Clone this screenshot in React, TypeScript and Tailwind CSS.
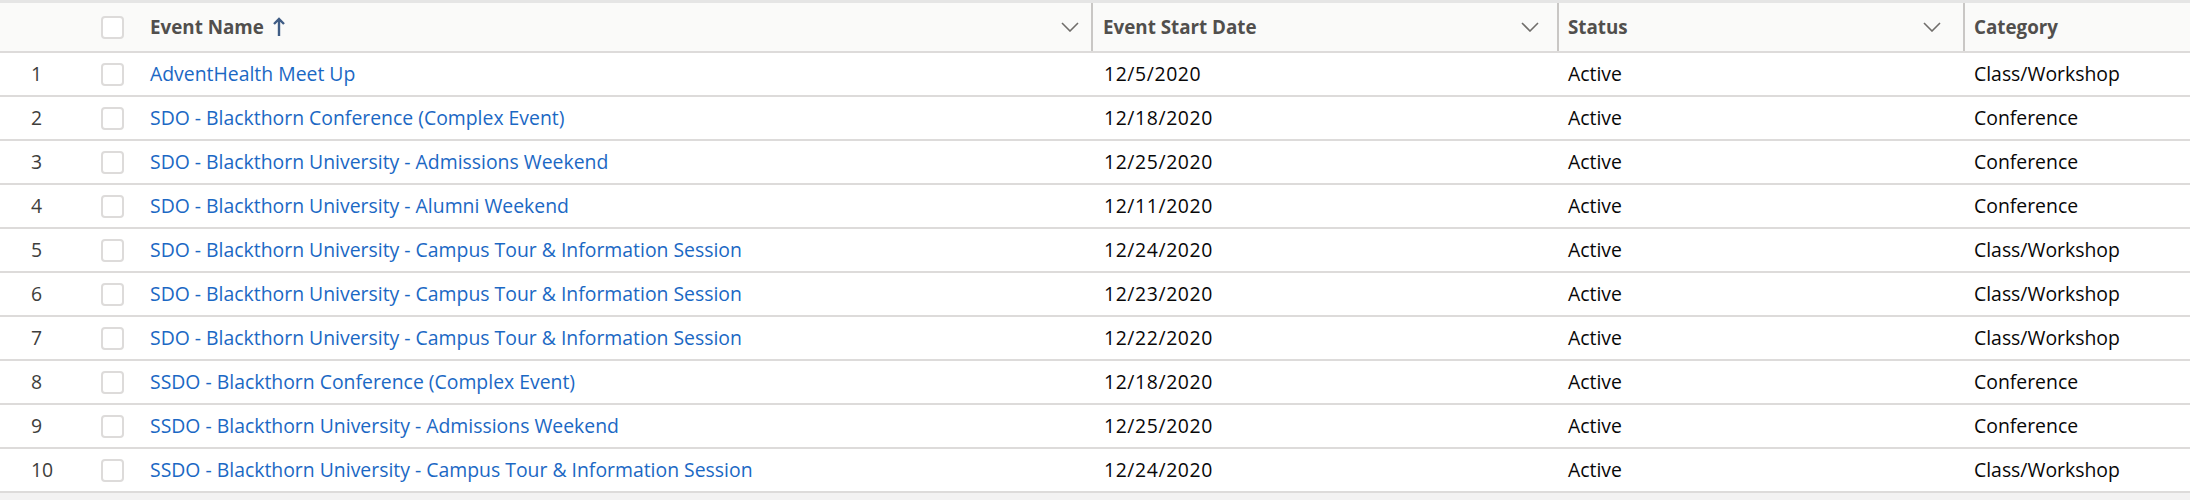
import React from "react";

type Row = { name: string; date: string; status: string; category: string };

const rows: Row[] = [
  { name: "AdventHealth Meet Up", date: "12/5/2020", status: "Active", category: "Class/Workshop" },
  { name: "SDO - Blackthorn Conference (Complex Event)", date: "12/18/2020", status: "Active", category: "Conference" },
  { name: "SDO - Blackthorn University - Admissions Weekend", date: "12/25/2020", status: "Active", category: "Conference" },
  { name: "SDO - Blackthorn University - Alumni Weekend", date: "12/11/2020", status: "Active", category: "Conference" },
  { name: "SDO - Blackthorn University - Campus Tour & Information Session", date: "12/24/2020", status: "Active", category: "Class/Workshop" },
  { name: "SDO - Blackthorn University - Campus Tour & Information Session", date: "12/23/2020", status: "Active", category: "Class/Workshop" },
  { name: "SDO - Blackthorn University - Campus Tour & Information Session", date: "12/22/2020", status: "Active", category: "Class/Workshop" },
  { name: "SSDO - Blackthorn Conference (Complex Event)", date: "12/18/2020", status: "Active", category: "Conference" },
  { name: "SSDO - Blackthorn University - Admissions Weekend", date: "12/25/2020", status: "Active", category: "Conference" },
  { name: "SSDO - Blackthorn University - Campus Tour & Information Session", date: "12/24/2020", status: "Active", category: "Class/Workshop" },
];

const Chevron = () => (
  <svg width="18" height="10" viewBox="0 0 18 10" fill="none">
    <path d="M1 1l8 8 8-8" stroke="#706e6b" strokeWidth="1.6" />
  </svg>
);

const Checkbox = () => (
  <div className="w-[23px] h-[23px] rounded-[4px] border-2 border-[#dddbda] bg-white" />
);

const HeaderLabel = ({ label, sorted }: { label: string; sorted?: boolean }) => (
  <div className="flex items-center gap-[9px] font-bold text-[18.8px] text-[#514f4d]">
    {label}
    {sorted && (
      <svg width="12" height="20" viewBox="0 0 12 20" fill="none">
        <path d="M6 19V2M1 7l5-5 5 5" stroke="#3f5c85" strokeWidth="2.4" />
      </svg>
    )}
  </div>
);

export default function App() {
  return (
    <div className="w-[2190px] h-[500px] bg-[#f3f2f2] text-[19.4px]" style={{ fontFamily: '"Open Sans", sans-serif' }}>
      <div className="border-t-[3px] border-[#e5e5e5] bg-white">
        {/* header */}
        <div className="flex h-[50px] bg-[#fafaf9] border-b-2 border-[#dddbda]">
          <div className="w-[101px]" />
          <div className="w-[49px] flex items-center">
            <Checkbox />
          </div>
          <div className="w-[943px] flex items-center justify-between pr-[12px] border-r-2 border-[#c9c7c5]">
            <HeaderLabel label="Event Name" sorted />
            <Chevron />
          </div>
          <div className="w-[466px] flex items-center justify-between pl-[10px] pr-[18px] border-r-2 border-[#c9c7c5]">
            <HeaderLabel label="Event Start Date" />
            <Chevron />
          </div>
          <div className="w-[406px] flex items-center justify-between pl-[9px] pr-[22px] border-r-2 border-[#c9c7c5]">
            <HeaderLabel label="Status" />
            <Chevron />
          </div>
          <div className="flex-1 flex items-center pl-[9px]">
            <HeaderLabel label="Category" />
          </div>
        </div>
        {/* body */}
        {rows.map((r, i) => (
          <div key={i} className="flex h-[44px] items-center border-b-2 border-[#dddbda] bg-white">
            <div className="w-[101px] pl-[31px] text-[#3e3e3c]">{i + 1}</div>
            <div className="w-[49px] flex items-center">
              <Checkbox />
            </div>
            <div className="w-[943px] text-[#1b68c4] whitespace-nowrap">{r.name}</div>
            <div className="w-[466px] pl-[11px] text-[#080707] tracking-[0.6px]">{r.date}</div>
            <div className="w-[406px] pl-[9px] text-[#080707]">{r.status}</div>
            <div className="flex-1 pl-[9px] text-[#080707]">{r.category}</div>
          </div>
        ))}
      </div>
    </div>
  );
}
